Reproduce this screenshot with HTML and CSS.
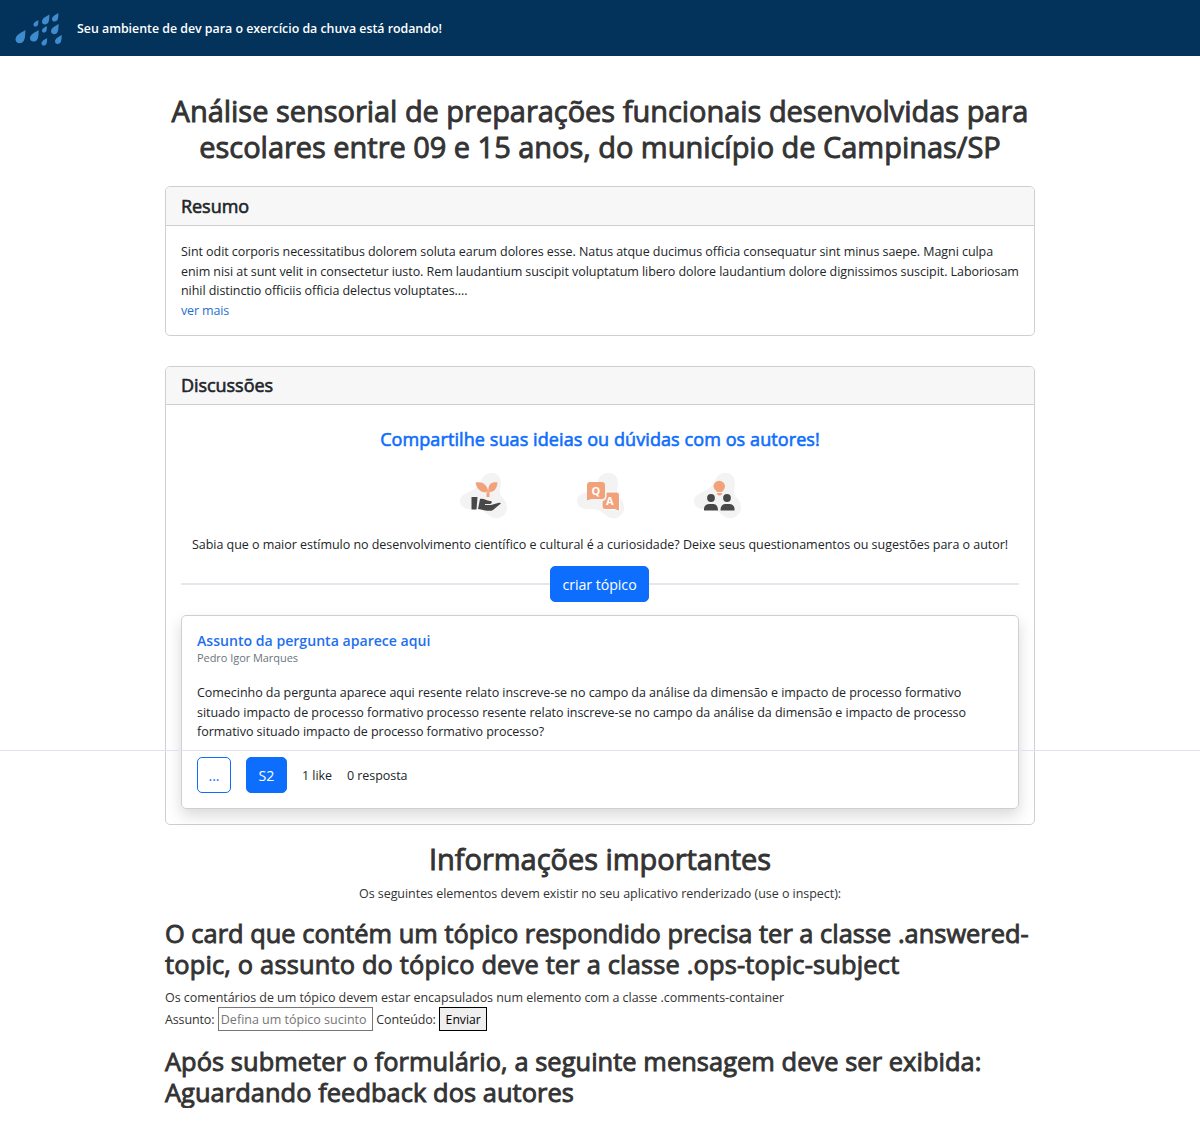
FILE: index.html
```html
<!DOCTYPE html>
<html lang="pt-BR">
<head>
<meta charset="utf-8">
<title>Chuva</title>
<link rel="stylesheet" href="styles.css">
</head>
<body>
<header class="topbar">
  <svg class="logo" width="50" height="36" viewBox="0 0 50 36" fill="#3f8bce">
    <defs><path id="drop" d="M10 0C7 2 0 4.500 0 9.500C0 14.500 8 14.500 9 9C10 6 9.500 3 10 0Z"/></defs>
    <use href="#drop" transform="translate(0.500 19)"/>
    <use href="#drop" transform="translate(15 19) scale(.88)"/>
    <use href="#drop" transform="translate(18.500 9) scale(.5)"/>
    <use href="#drop" transform="translate(27 3.500) scale(.75)"/>
    <use href="#drop" transform="translate(37 2) scale(.65)"/>
    <use href="#drop" transform="translate(27 15) scale(.5)"/>
    <use href="#drop" transform="translate(36 13) scale(.77)"/>
    <use href="#drop" transform="translate(26.500 27) scale(.57)"/>
    <use href="#drop" transform="translate(40 24) scale(.68)"/>
  </svg>
  <strong class="brand">Seu ambiente de dev para o exercício da chuva está rodando!</strong>
</header>
<main class="page">
  <h1 class="title">Análise sensorial de preparações funcionais desenvolvidas para<br>escolares entre 09 e 15 anos, do município de Campinas/SP</h1>
  <section class="card summary">
    <h2 class="card-header">Resumo</h2>
    <div class="card-body">
      <p class="abstract">Sint odit corporis necessitatibus dolorem soluta earum dolores esse. Natus atque ducimus officia consequatur sint minus saepe. Magni culpa<br>enim nisi at sunt velit in consectetur iusto. Rem laudantium suscipit voluptatum libero dolore laudantium dolore dignissimos suscipit. Laboriosam<br>nihil distinctio officiis officia delectus voluptates....<br><a class="more">ver mais</a></p>
    </div>
  </section>
  <section class="card discussions">
    <h2 class="card-header">Discussões</h2>
    <div class="card-body">
      <h3 class="share">Compartilhe suas ideias ou dúvidas com os autores!</h3>
      <div class="icons">
        <svg width="48" height="48" viewBox="0 0 48 48"><use href="#blob"/>
          <path fill="#f2a27a" d="M15.500 9.500C22 8 27 11 28.500 19C22 20.500 17 17 15.500 9.500ZM37.500 9.500C32 8.500 29 11 28.500 15L28 20L26.500 18V24H29.500V19C34 19 37 16 37.500 9.500Z"/>
          <path fill="#484848" d="M11.500 24H17.500L16.500 36.500H11.500ZM20 26C24 25 26 28 30 28C33 28 32 31 29 31H25V32H31L38 30C42 29 41 31 39 32L33 37C30 39 24 37 18 36Z"/></svg>
        <svg width="48" height="48" viewBox="0 0 48 48"><defs><path id="blob" fill="#f3f3f3" d="M20 10C23 -2 36 -3 40 5C43 13 37 18 42 24C50 31 48 42 39 45C29 47 27 37 17 36C7 37 0 35 0 28C0 19 15 20 20 10Z"/></defs><use href="#blob"/>
          <path fill="#f2a27a" d="M13 9H25Q28 9 28 12V23Q28 26 25 26H14L10 27.500V12Q10 9 13 9Z"/>
          <path fill="#f2a27a" stroke="#fff" d="M29 19H39.500Q42.500 19 42.500 22V38.500L38 36.500H28Q25 36.500 25 34V28Q29 27 29 24Z"/>
          <text class="glyph" x="14.500" y="22">Q</text><text class="glyph" x="29" y="32">A</text></svg>
        <svg width="48" height="48" viewBox="0 0 48 48"><use href="#blob"/>
          <path fill="#f2a27a" d="M19.500 13.500A5.750 5.750 0 0 1 31 13.500C31 16 29 17 28 19H23C22 17 19.500 16 19.500 13.500ZM23 20H28V21Q25.500 24 23 21Z"/>
          <g fill="#484848"><circle cx="17" cy="25" r="3.900"/><circle cx="33" cy="25" r="3.900"/><path d="M10 37.500V35.500Q10.500 31 15.500 31H19.500Q24 31.500 24 37.500ZM26.500 37.500Q26.500 31.500 31 31H35Q40 31 40.500 35.500V37.500Z"/></g></svg>
      </div>
      <p class="hint">Sabia que o maior estímulo no desenvolvimento científico e cultural é a curiosidade? Deixe seus questionamentos ou sugestões para o autor!</p>
      <div class="create"><button class="btn btn-create">criar tópico</button></div>
      <article class="topic">
        <h4 class="subject">Assunto da pergunta aparece aqui</h4>
        <p class="author">Pedro Igor Marques</p>
        <p class="question">Comecinho da pergunta aparece aqui resente relato inscreve-se no campo da análise da dimensão e impacto de processo formativo<br>situado impacto de processo formativo processo resente relato inscreve-se no campo da análise da dimensão e impacto de processo<br>formativo situado impacto de processo formativo processo?</p>
        <div class="actions"><button class="btn btn-outline">...</button><button class="btn btn-like">S2</button><span class="count">1 like</span><span class="count">0 resposta</span></div>
      </article>
    </div>
  </section>
  <h1 class="info">Informações importantes</h1>
  <p class="info-text">Os seguintes elementos devem existir no seu aplicativo renderizado (use o inspect):</p>
  <h2 class="rule"><span class="rule-lead">O card que contém um tópico respondido precisa ter a classe .answered-</span><br><span class="rule-rest">topic, o assunto do tópico deve ter a classe .ops-topic-subject</span></h2>
  <p class="note">Os comentários de um tópico devem estar encapsulados num elemento com a classe .comments-container</p>
  <form class="form"><label class="label">Assunto:</label><input class="field" placeholder="Defina um tópico sucinto"><label class="label">Conteúdo:</label><button type="button" class="send">Enviar</button></form>
  <h2 class="rule">Após submeter o formulário, a seguinte mensagem deve ser exibida:<br>Aguardando feedback dos autores</h2>
</main>
<div class="guide"></div>
</body>
</html>
```
FILE: styles.css
```css
* { box-sizing: border-box; }
body { margin: 0; background: #fff; color: #212529; font: 12.5px/19.5px "Open Sans", "Noto Sans", sans-serif; }
h1, h2, h3, h4, p { margin: 0; font-weight: 400; white-space: nowrap; }
button, input { font-family: inherit; }
.topbar { height: 56px; background: #03325b; color: #fff; display: flex; align-items: center; padding: 1px 15px 0; gap: 12px; }
.brand { font-weight: 600; font-size: 12.4px; letter-spacing: -.02px; }
.page { width: 870px; margin: 0 auto; padding-top: 37px; color: #333; }
.title, .info, .rule { -webkit-text-stroke: .9px currentColor; }
.share, .card-header { -webkit-text-stroke: .6px currentColor; }
.title { font-size: 29px; line-height: 36px; text-align: center; letter-spacing: -.03px; }
.card { border: 1px solid #cfcfcf; border-radius: 5px; margin-top: 21px; color: #212529; }
.card-header { height: 39px; background: #f7f7f7; border-bottom: 1px solid #cfcfcf; border-radius: 4px 4px 0 0; padding: 0 15px; font-size: 18px; line-height: 39px; letter-spacing: -.05px; }
.card-body { padding: 15px; }
.summary { height: 150px; }
.summary .card-body { padding-top: 16px; }
.abstract { letter-spacing: -.058px; }
.discussions { height: 459px; margin-top: 30px; }
.discussions .card-header { height: 38px; line-height: 37px; }
.more { color: #1f6fd0; letter-spacing: -.14px; }
.share { margin-top: 8px; font-size: 18px; line-height: 22px; color: #0d6efd; text-align: center; letter-spacing: .09px; }
.icons { display: flex; justify-content: center; gap: 69px; margin-top: 23px; padding-left: 1px; }
.icons svg { display: block; }
.glyph { font: 700 11px "Open Sans", sans-serif; fill: #fff; }
.hint { text-align: center; margin-top: 14px; letter-spacing: -.037px; }
.create { display: flex; align-items: center; margin-top: 11.5px; }
.create::before, .create::after { content: ""; height: 2px; background: #e4e7eb; }
.create::before { flex: 0 0 369px; }
.create::after { flex: 1; }
.btn { height: 36px; border: 1px solid #0d6efd; border-radius: 5px; background: #0d6efd; color: #fff; font-size: 14.2px; padding: 0; }
.btn-create { width: 99px; letter-spacing: -.04px; }
.topic { height: 194px; margin-top: 13px; border: 1px solid #cfcfcf; border-radius: 5px; padding: 15px; box-shadow: 0 7px 15px rgba(0,0,0,.15); }
.subject { font-size: 14.1px; line-height: 20px; color: #1f6ff0; font-weight: 600; }
.author { font-size: 11px; line-height: 13px; color: #6c757d; letter-spacing: -.05px; }
.question { margin-top: 19px; letter-spacing: -.036px; }
.actions { display: flex; align-items: center; gap: 15px; margin-top: 15.5px; }
.count { padding-top: 1px; letter-spacing: -.05px; }
.btn-outline { width: 34px; background: #fff; color: #0d6efd; }
.btn-like { width: 41px; }
.info { font-size: 29px; line-height: 36px; text-align: center; margin-top: 16px; letter-spacing: -.03px; }
.info-text { text-align: center; margin-top: 6.5px; letter-spacing: -.045px; }
.rule { font-size: 25.4px; line-height: 31px; margin-top: 15px; letter-spacing: .06px; }
.rule-lead { letter-spacing: .012px; }
.rule-rest { letter-spacing: .18px; }
.note { margin-top: 7.5px; letter-spacing: -.05px; }
.form { display: flex; align-items: center; gap: 3.5px; }
.label { padding-top: 1px; letter-spacing: -.14px; }
.field { width: 155px; height: 24px; border: 1px solid #767676; padding: 0 2px; font-size: 12.5px; }
.send { width: 48px; height: 24px; border: 1px solid #000; background: #efefef; padding: 0; font-size: 12.2px; }
.guide { position: absolute; left: 0; top: 750px; width: 100%; height: 1px; background: #e2e2ee; }
```
